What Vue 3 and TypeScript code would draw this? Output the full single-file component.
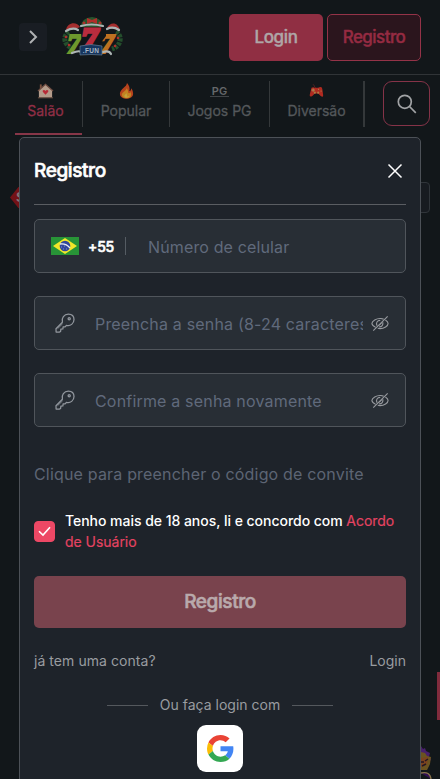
<script setup lang="ts">
import { ref } from 'vue'

interface Tab {
  id: string
  label: string
}

const tabs: Tab[] = [
  { id: 'home', label: 'Salão' },
  { id: 'popular', label: 'Popular' },
  { id: 'pg', label: 'Jogos PG' },
  { id: 'fun', label: 'Diversão' },
]

const active = ref('home')
const accepted = ref(true)
const phone = ref('')
const passwords = ref([
  { placeholder: 'Preencha a senha (8-24 caracteres)', value: '', visible: false },
  { placeholder: 'Confirme a senha novamente', value: '', visible: false },
])
</script>

<template>
  <div class="page">
    <header class="header">
      <button class="expand" aria-label="Menu">
        <svg width="28" height="28" viewBox="0 0 28 28" fill="none" stroke="#b0b2b4" stroke-width="2">
          <path d="M11 8l6 6-6 6" />
        </svg>
      </button>
      <svg class="logo" width="64" height="44" viewBox="0 0 64 44">
        <g fill="none" stroke="#244e2c" stroke-width="5" stroke-dasharray="3 1">
          <path d="M8 17C1 21 3 31 12 33" />
          <path d="M55 17c7 4 5 14-4 17" />
        </g>
        <path d="M20 12q0-9 11-10q10 1 11 10z" fill="#28552d" />
        <g fill="#b12e2b">
          <circle cx="5" cy="22" r="1.3" /><circle cx="8" cy="30" r="1.3" />
          <circle cx="57" cy="23" r="1.3" /><circle cx="54" cy="31" r="1.3" />
          <circle cx="23" cy="8" r="1.5" /><circle cx="39" cy="8" r="1.5" />
          <path d="M26 3l5 2 5-2v6l-5-2-5 2z" />
        </g>
        <g font-family="Liberation Serif, serif" font-weight="700" font-style="italic" stroke-width="2">
          <text x="6" y="38" font-size="28" fill="#6d982d" stroke="#6d982d">7</text>
          <text x="39" y="38" font-size="28" fill="#bd7121" stroke="#bd7121">7</text>
          <path d="M20 15h25v6L34 36H21z" fill="#101519" />
          <text x="20" y="35.500" font-size="34" fill="#b92c3e" stroke="#b92c3e" stroke-width="3">7</text>
        </g>
        <path d="M5 15C6 7 16 6 19 12l-4 2z" fill="#a52e2e" />
        <path d="M46 13c3-7 12-6 13 3l-6-2z" fill="#a52e2e" />
        <path d="M5 16q7-4 12-1M46 14q6-3 12 1M20 11q10-3 22 0M11 38q7-3 9-1M42 37q6-2 8 2" fill="none" stroke="#adb5b5" stroke-width="2.200" stroke-linecap="round" />
        <path d="M19 31q11-3 22 0v9q-11-1-22 0z" fill="#16355e" stroke="#708a9f" stroke-width=".6" />
        <text x="30" y="38.400" text-anchor="middle" class="logo-text">.FUN</text>
      </svg>
      <div class="auth">
        <button class="btn solid">Login</button>
        <button class="btn outline">Registro</button>
      </div>
    </header>

    <nav class="nav">
      <div class="tabs">
        <a v-for="tab in tabs" :key="tab.id" class="tab" :class="[tab.id, { active: active === tab.id }]" @click="active = tab.id">
          <svg v-if="tab.id === 'home'" class="tab-icon" viewBox="0 0 18 18">
            <path d="M3 2h2v5H3z" fill="#7c5340" />
            <path d="M2 8.500 9 2l7 6.500V16H2z" fill="#b49c8b" />
            <path d="M1 9 9 2l8 7" fill="none" stroke="#714e43" stroke-width="1.300" />
            <path d="M9 13 6.300 10C5 8 8 7 9 9c1-2 4-1 2.700 1z" fill="#b82b37" />
            <path d="M1 16.200h16" stroke="#735646" />
          </svg>
          <svg v-else-if="tab.id === 'popular'" class="tab-icon" viewBox="0 0 18 18">
            <path d="M9.500 .5c0 4-7.500 6.500-7.500 11.500 0 7 14 7 14 0 0-3-1-5-2-6 0 2-1 3-2 3 1-4-1-7-2.500-8.500z" fill="#b7431d" />
            <path d="M9 6c0 3-5 4-5 7 0 5 10 5 10 0 0-2-1-3-1-3-1 2-2 1-2 1 0-2-1-4-2-5z" fill="#c38322" />
            <path d="M9 11c-1 2-3 2-2 4s5 1 5-1l-2 1z" fill="#c4a43b" />
          </svg>
          <span v-else-if="tab.id === 'pg'" class="tab-icon pg-logo"><b>PG</b></span>
          <svg v-else class="tab-icon game" viewBox="0 0 18 18">
            <path d="M8 5C6 4 7 3 5 1" fill="none" stroke="#642325" />
            <path d="M3 5q2-1 4 0h4q5-2 5 2l1 7q0 3-3 1l-3-3H7l-3 3q-4 2-3-2z" fill="#b02a20" />
            <path d="M3 8h4M5 6v4M11 7h1M14 9h1" stroke="#ad8150" stroke-width="1.500" />
            <circle cx="7" cy="11" r="1.300" fill="#ad7c42" /><circle cx="11" cy="11" r="1.300" fill="#ad7c42" />
          </svg>
          <span class="tab-label">{{ tab.label }}</span>
        </a>
      </div>
      <button class="search" aria-label="Buscar">
        <svg width="20" height="20" viewBox="0 0 20 20" fill="none" stroke="#a1a3a5" stroke-width="1.700">
          <circle cx="7.800" cy="7.800" r="6.500" /><path d="M12.500 12.500l6.300 6.300" />
        </svg>
      </button>
    </nav>

    <div class="ticket">S</div>
    <div class="picker"></div>
    <div class="side-tab"></div>
    <svg class="mascot" width="16" height="34" viewBox="0 0 16 34">
      <path d="M0 1l2 3 2-1 1 3 4 2-1 4 2 2-2 4H0z" fill="#47206b" />
      <path d="M0 7l4 1 2 3 4 1-1 7-3 6H0z" fill="#6b5320" />
      <path d="M0 13l7-1-1 7-6 3z" fill="#7c431e" />
      <path d="M0 17h3M4 16l3-2M1 21l4-2" stroke="#241622" stroke-width="1.500" />
      <path d="M0 28q9-2 10 6" fill="#321052" stroke="#89754c" stroke-width="1.300" />
    </svg>

    <section class="modal" role="dialog">
      <div class="modal-head">
        <h2>Registro</h2>
        <button class="close" aria-label="Fechar">
          <svg width="16" height="16" viewBox="0 0 16 16" stroke="#fff" stroke-width="1.500"><path d="M1.500 1.500l13 13M14.500 1.500l-13 13" /></svg>
        </button>
      </div>

      <form class="form" @submit.prevent>
        <div class="field phone">
          <svg class="flag" width="28" height="18" viewBox="0 0 28 18">
            <path d="M0 0h28v18H0z" fill="#289437" />
            <path d="M2 9 14 1l12 8-12 8z" fill="#f3e629" />
            <circle cx="14" cy="9" r="5.300" fill="#30469c" />
            <path d="M9 7q6-1 10 4" fill="none" stroke="#e9edf5" stroke-width="1.300" />
            <path d="M10 10h1M12 12h1M15 12h1M13 9h1" stroke="#a8b2df" stroke-width=".7" />
          </svg>
          <span class="code">+55</span>
          <i class="bar"></i>
          <input v-model="phone" type="tel" placeholder="Número de celular" />
        </div>

        <div v-for="item in passwords" :key="item.placeholder" class="field">
          <svg class="key" width="20" height="20" viewBox="0 0 20 20" fill="none" stroke="#92979e" stroke-width="1.250" stroke-linejoin="round">
            <path d="M7.400 9.200C6.200 5 9.200 1 13.300 1 17 1 19 3.500 19 6.600c0 4-3.500 6.800-7.600 5.800l-1.300 1.500-2-.1-.2 2.200-2 .1-.3 2.300-1.300.8-3.200-.1-.1-3.400z" />
            <path d="M2.600 15.700l5-4.900" stroke-width=".8" /><circle cx="14.200" cy="5.800" r="1.100" />
          </svg>
          <input v-model="item.value" :type="item.visible ? 'text' : 'password'" :placeholder="item.placeholder" />
          <svg class="eye" width="18" height="17" viewBox="0 0 20 18" fill="none" stroke="#96999e" stroke-width="1.250" @click="item.visible = !item.visible">
            <path d="M5.200 13.300C2.800 12 1 10 1 9c0-2.500 5-6 10-5.500l3 .6M16 5.200c1.800 1.200 3 2.700 3 3.800 0 2.500-4.500 5.800-9 5.700l-2.500-.4" />
            <path d="M6.800 11.500C5 8.500 7 5.500 10.300 5.600M13 7.500c1 3-1 5.300-4 5.200" />
            <path d="M2.500 17L18.500 1M9 11l3-3" />
          </svg>
        </div>

        <a class="invite">Clique para preencher o código de convite</a>

        <div class="terms">
          <button type="button" class="check" :class="{ on: accepted }" aria-label="Aceitar" @click="accepted = !accepted">
            <svg v-if="accepted" width="13" height="11" viewBox="0 0 13 11" fill="none" stroke="#fff" stroke-width="1.600"><path d="M1 5.200l4 3.900L12 1.200" /></svg>
          </button>
          <p>Tenho mais de 18 anos, li e concordo com <a>Acordo<br />de Usuário</a></p>
        </div>

        <button class="submit">Registro</button>
        <div class="account"><span class="question">já tem uma conta?</span><a>Login</a></div>
        <div class="alternative"><i></i><span>Ou faça login com</span><i></i></div>
        <button type="button" class="google" aria-label="Google">
          <svg width="27" height="27" viewBox="0 0 48 48">
            <path fill="#e94335" d="M24 9.500c3.540 0 6.710 1.220 9.210 3.600l6.850-6.850C35.900 2.380 30.470 0 24 0 14.620 0 6.510 5.380 2.560 13.220l7.980 6.190C12.430 13.720 17.740 9.500 24 9.500z" />
            <path fill="#4285f4" d="M46.980 24.550c0-1.570-.15-3.090-.38-4.550H24v9.020h12.940c-.58 2.960-2.260 5.480-4.780 7.180l7.730 6C44.400 38.040 46.980 31.840 46.980 24.550z" />
            <path fill="#fbbc05" d="M10.530 28.590A14.500 14.500 0 0 1 9.770 24c0-1.600.27-3.140.76-4.590l-7.980-6.190A23.900 23.900 0 0 0 0 24c0 3.880.92 7.540 2.560 10.780z" />
            <path fill="#34a853" d="M24 48c6.480 0 11.930-2.130 15.890-5.810l-7.730-6c-2.150 1.450-4.920 2.300-8.160 2.300-6.260 0-11.570-4.220-13.470-9.910l-7.980 6.190C6.510 42.620 14.620 48 24 48z" />
          </svg>
        </button>
      </form>
    </section>
  </div>
</template>

<style>
body {
  background: #12171a;
  overflow: hidden;
}
</style>

<style scoped>
.page {
  position: relative;
  width: 440px;
  height: 779px;
  overflow: hidden;
  background: #12171a;
  color: #fff;
  font-family: Inter, 'Liberation Sans', sans-serif;
  font-size: 16px;
}
.page * { box-sizing: border-box; }
button, input { font: inherit; padding: 0; margin: 0; border: 0; background: none; }
svg { display: block; flex: none; }
.header {
  display: flex;
  align-items: center;
  height: 75px;
  padding: 0 19px;
  border-bottom: 1px solid #303437;
}
.expand { width: 28px; height: 28px; border-radius: 4px; background: #191d23; }
.logo { margin-left: 14px; }
.logo-text { fill: #a8b6c4; font-family: 'Liberation Sans', sans-serif; font-size: 6.5px; font-weight: 700; letter-spacing: .3px; }
.auth { display: flex; gap: 4px; margin-left: auto; }
.btn { width: 94px; height: 47px; border-radius: 5px; font-size: 17px; font-weight: 500; letter-spacing: -.35px; -webkit-text-stroke: .4px currentColor; }
.solid { background: #902f43; color: #afa6a7; }
.outline { border: 1px solid #943348; background: #2b151d; color: #952b42; letter-spacing: -.55px; }
.nav { display: flex; height: 62px; padding: 6px 10px 0 15px; }
.tabs { display: flex; height: 54px; }
.tab { position: relative; display: flex; flex-direction: column; align-items: center; width: 87px; height: 46px; padding: 1px 7px 0; border-right: 1px solid #34383a; color: #54585b; font-size: 14px; }
.tab.home { width: 68px; padding: 1px 7px 0 1px; }
.tab.pg { width: 100px; }
.tab.fun { width: 95px; padding-right: 7px; border-right: 2px solid #34383a; }
.tab.active { color: #902f46; }
.tab.active::after { content: ''; position: absolute; left: 0; bottom: -8px; width: 67px; height: 2px; background: #873648; }
.tab-icon { width: 17px; height: 18px; }
.tab-icon.game { width: 15px; }
.tab-label { line-height: 18px; margin-top: 2px; white-space: nowrap; -webkit-text-stroke: .3px currentColor; }
.pg-logo { width: 19px; height: 18px; padding-top: 4px; color: #65686a; font-size: 11px; line-height: 10px; text-align: center; }
.pg-logo b { display: block; border-bottom: 1px solid #404447; font-weight: 600; }
.search { display: grid; place-items: center; width: 47px; height: 45px; margin-left: auto; border: 1px solid #853348; border-radius: 9px; }
.ticket { position: absolute; left: 10px; top: 187px; width: 24px; height: 21px; clip-path: polygon(0 50%, 35% 0, 100% 0, 100% 100%, 35% 100%); background: #731217; color: #827578; font: 700 14px/21px 'Liberation Sans', sans-serif; padding-left: 6px; }
.picker { position: absolute; left: 400px; top: 182px; width: 30px; height: 31px; border: 1px solid #30353a; border-radius: 4px; background: #171b20; }
.side-tab { position: absolute; right: 0; top: 672px; width: 3px; height: 48px; background: #802b3c; }
.mascot { position: absolute; left: 421px; top: 745px; }
.modal { position: absolute; left: 19px; top: 137px; width: 402px; height: 660px; padding: 0 14px; border: 1px solid #4c5157; border-radius: 5px; background: #1e232a; }
.modal-head { display: flex; align-items: center; justify-content: space-between; height: 67px; border-bottom: 1px solid #5a5d62; }
h2 { margin: 0; font-size: 19px; line-height: 24px; font-weight: 500; letter-spacing: -.4px; -webkit-text-stroke: .6px currentColor; }
.close { padding-right: 3px; }
.form { display: flex; flex-direction: column; padding-top: 14px; }
.field { display: flex; align-items: center; height: 54px; margin-bottom: 23px; padding: 0 16px 0 20px; border: 1px solid #50555b; border-radius: 5px; background: #282e35; }
.field input { flex: 1; min-width: 0; height: 36px; margin: 2px 8px 0 20px; outline: 0; color: #fff; font-size: 16px; letter-spacing: .18px; }
.field input::placeholder { color: #606a7c; opacity: 1; }
.phone { padding-left: 16px; }
.code { margin-left: 9px; font-size: 14px; font-weight: 500; letter-spacing: -.2px; -webkit-text-stroke: .6px currentColor; }
.bar { width: 1px; height: 18px; margin-left: 11px; background: #555c63; }
.phone input { margin-left: 22px; letter-spacing: .13px; }
.invite { line-height: 20px; color: #5d6574; margin-top: 14px; letter-spacing: .18px; white-space: nowrap; }
.terms { display: flex; align-items: center; height: 42px; margin-top: 26px; }
.check { display: grid; place-items: center; width: 21px; height: 21px; border: 1px solid #ed4865; border-radius: 4px; }
.check.on { background: #ed4865; }
.terms p { margin: 0 0 0 10px; font-size: 14px; line-height: 21px; font-weight: 500; letter-spacing: -.03px; white-space: nowrap; }
.terms p a { color: #e64362; font-weight: 400; -webkit-text-stroke: .15px currentColor; }
.submit { height: 52px; margin-top: 24px; padding-bottom: 1px; border-radius: 5px; background: #79434d; color: #b9aaac; font-size: 19px; font-weight: 500; letter-spacing: -.4px; -webkit-text-stroke: .6px currentColor; }
.account { display: flex; justify-content: space-between; margin-top: 23px; line-height: 20px; font-size: 14px; color: #999ca0; }
.question { letter-spacing: .06px; }
.alternative { display: flex; align-items: center; justify-content: center; gap: 12px; margin-top: 24px; line-height: 20px; font-size: 14px; color: #999ca0; }
.alternative i { width: 41px; height: 1px; background: #54585d; }
.google { display: grid; place-items: center; align-self: center; width: 46px; height: 47px; margin-top: 10px; border-radius: 9px; background: #fff; }
</style>
